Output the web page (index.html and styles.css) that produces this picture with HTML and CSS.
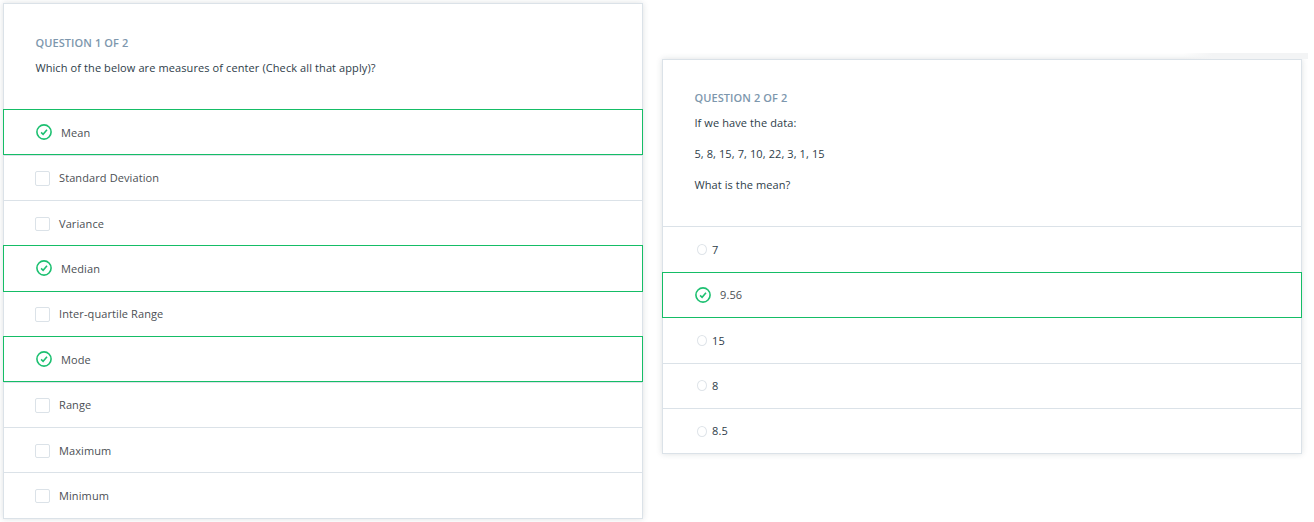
FILE: index.html
```
<!DOCTYPE html>
<html lang="en">
<head>
<meta charset="utf-8">
<title>Quiz</title>
<link rel="stylesheet" href="styles.css">
</head>
<body>
<svg class="defs" width="0" height="0" aria-hidden="true">
  <symbol id="check" viewBox="0 0 16 16">
    <circle cx="8" cy="8" r="7.1" fill="none" stroke="currentColor" stroke-width="1.6"/>
    <path d="M5.1 8.4l2 1.9 3.9-4.5" fill="none" stroke="currentColor" stroke-width="1.6"/>
  </symbol>
</svg>
<main class="board">
  <section class="card card-first">
    <header class="head">
      <h2 class="label">QUESTION 1 OF 2</h2>
      <p class="prompt">Which of the below are measures of center (Check all that apply)?</p>
    </header>
    <div class="row selected"><svg class="icon"><use href="#check"/></svg><span class="lower">Mean</span></div>
    <div class="row ruled-top ruled"><i class="box"></i><span>Standard Deviation</span></div>
    <div class="row nudge"><i class="box short"></i><span>Variance</span></div>
    <div class="row selected"><svg class="icon raised"><use href="#check"/></svg><span>Median</span></div>
    <div class="row"><i class="box"></i><span>Inter-quartile Range</span></div>
    <div class="row selected"><svg class="icon"><use href="#check"/></svg><span class="lower">Mode</span></div>
    <div class="row ruled-top ruled"><i class="box"></i><span>Range</span></div>
    <div class="row ruled nudge"><i class="box short"></i><span>Maximum</span></div>
    <div class="row"><i class="box short"></i><span>Minimum</span></div>
  </section>
  <section class="card card-second">
    <header class="head ruled">
      <h2 class="label">QUESTION 2 OF 2</h2>
      <p class="prompt">If we have the data:</p>
      <p class="prompt">5, 8, 15, 7, 10, 22, 3, 1, 15</p>
      <p class="prompt">What is the mean?</p>
    </header>
    <div class="row dark"><i class="radio"></i><span>7</span></div>
    <div class="row selected"><svg class="icon"><use href="#check"/></svg><span>9.56</span></div>
    <div class="row dark ruled"><i class="radio"></i><span>15</span></div>
    <div class="row dark ruled"><i class="radio raised"></i><span>8</span></div>
    <div class="row dark"><i class="radio"></i><span>8.5</span></div>
  </section>
</main>
</body>
</html>
```
FILE: styles.css
```
* { box-sizing: border-box; }
body {
  margin: 0;
  background: #fff;
  font: 11px/16px "Open Sans", "Noto Sans", sans-serif;
  overflow: hidden;
}
.defs { display: block; }
.board {
  display: flex;
  align-items: flex-start;
  gap: 19px;
  padding: 3px 0 0 3px;
  height: 522px;
}
.card {
  display: grid;
  width: 640px;
  flex: none;
  border: 1px solid #dbe2e8;
  background: #fff;
  box-shadow: 0 0 6px rgba(46, 61, 73, 0.16);
}
.card-first { grid-template-rows: 105px 46px 46px 44px 47px 44px 46px 46px 45px 45px; }
.card-second {
  grid-template-rows: 167px 45px 46px 46px 45px 44px;
  margin-top: 56px;
  position: relative;
}
.card-second::before {
  content: "";
  position: absolute;
  right: -7px;
  top: -7px;
  width: 125px;
  height: 6px;
  background: linear-gradient(to right, rgba(240, 241, 242, 0), #f3f4f5 30px);
}
.head { padding: 31px 31px 0 31.4px; }
.card-second .head { padding-top: 30px; }
.label {
  margin: 0 0 9px;
  font-size: 11px;
  font-weight: 600;
  line-height: 16px;
  letter-spacing: 0.1px;
  color: #7d97ad;
}
.prompt {
  margin: 0 0 15px;
  letter-spacing: 0.1px;
  color: #2e3d49;
}
.row {
  display: flex;
  align-items: center;
  padding-left: 31px;
  color: #4b4f54;
  letter-spacing: 0.1px;
}
.dark { color: #2e3d49; }
.ruled { border-bottom: 1px solid #dbe2e8; }
.ruled-top { border-top: 1px solid #dbe2e8; }
.selected {
  margin: 0 -1px;
  border: 1px solid #15bd66;
  background: #fff;
  position: relative;
}
.icon {
  width: 16px;
  height: 16px;
  margin: 0 9.5px 0 0.5px;
  color: #1dc071;
  flex: none;
}
.lower { padding-top: 2px; }
.nudge { padding-top: 2px; }
.raised { margin-bottom: 2px; }
.box {
  width: 15px;
  height: 15px;
  margin-right: 9px;
  border: 1px solid #dbe2e8;
  border-radius: 2px;
}
.short { height: 14px; }
.radio {
  width: 10px;
  height: 11px;
  margin: 0 5px 0 3px;
  border: 1px solid #dfe4e9;
  border-radius: 50%;
}
.radio.raised { margin-bottom: 1px; }
```
